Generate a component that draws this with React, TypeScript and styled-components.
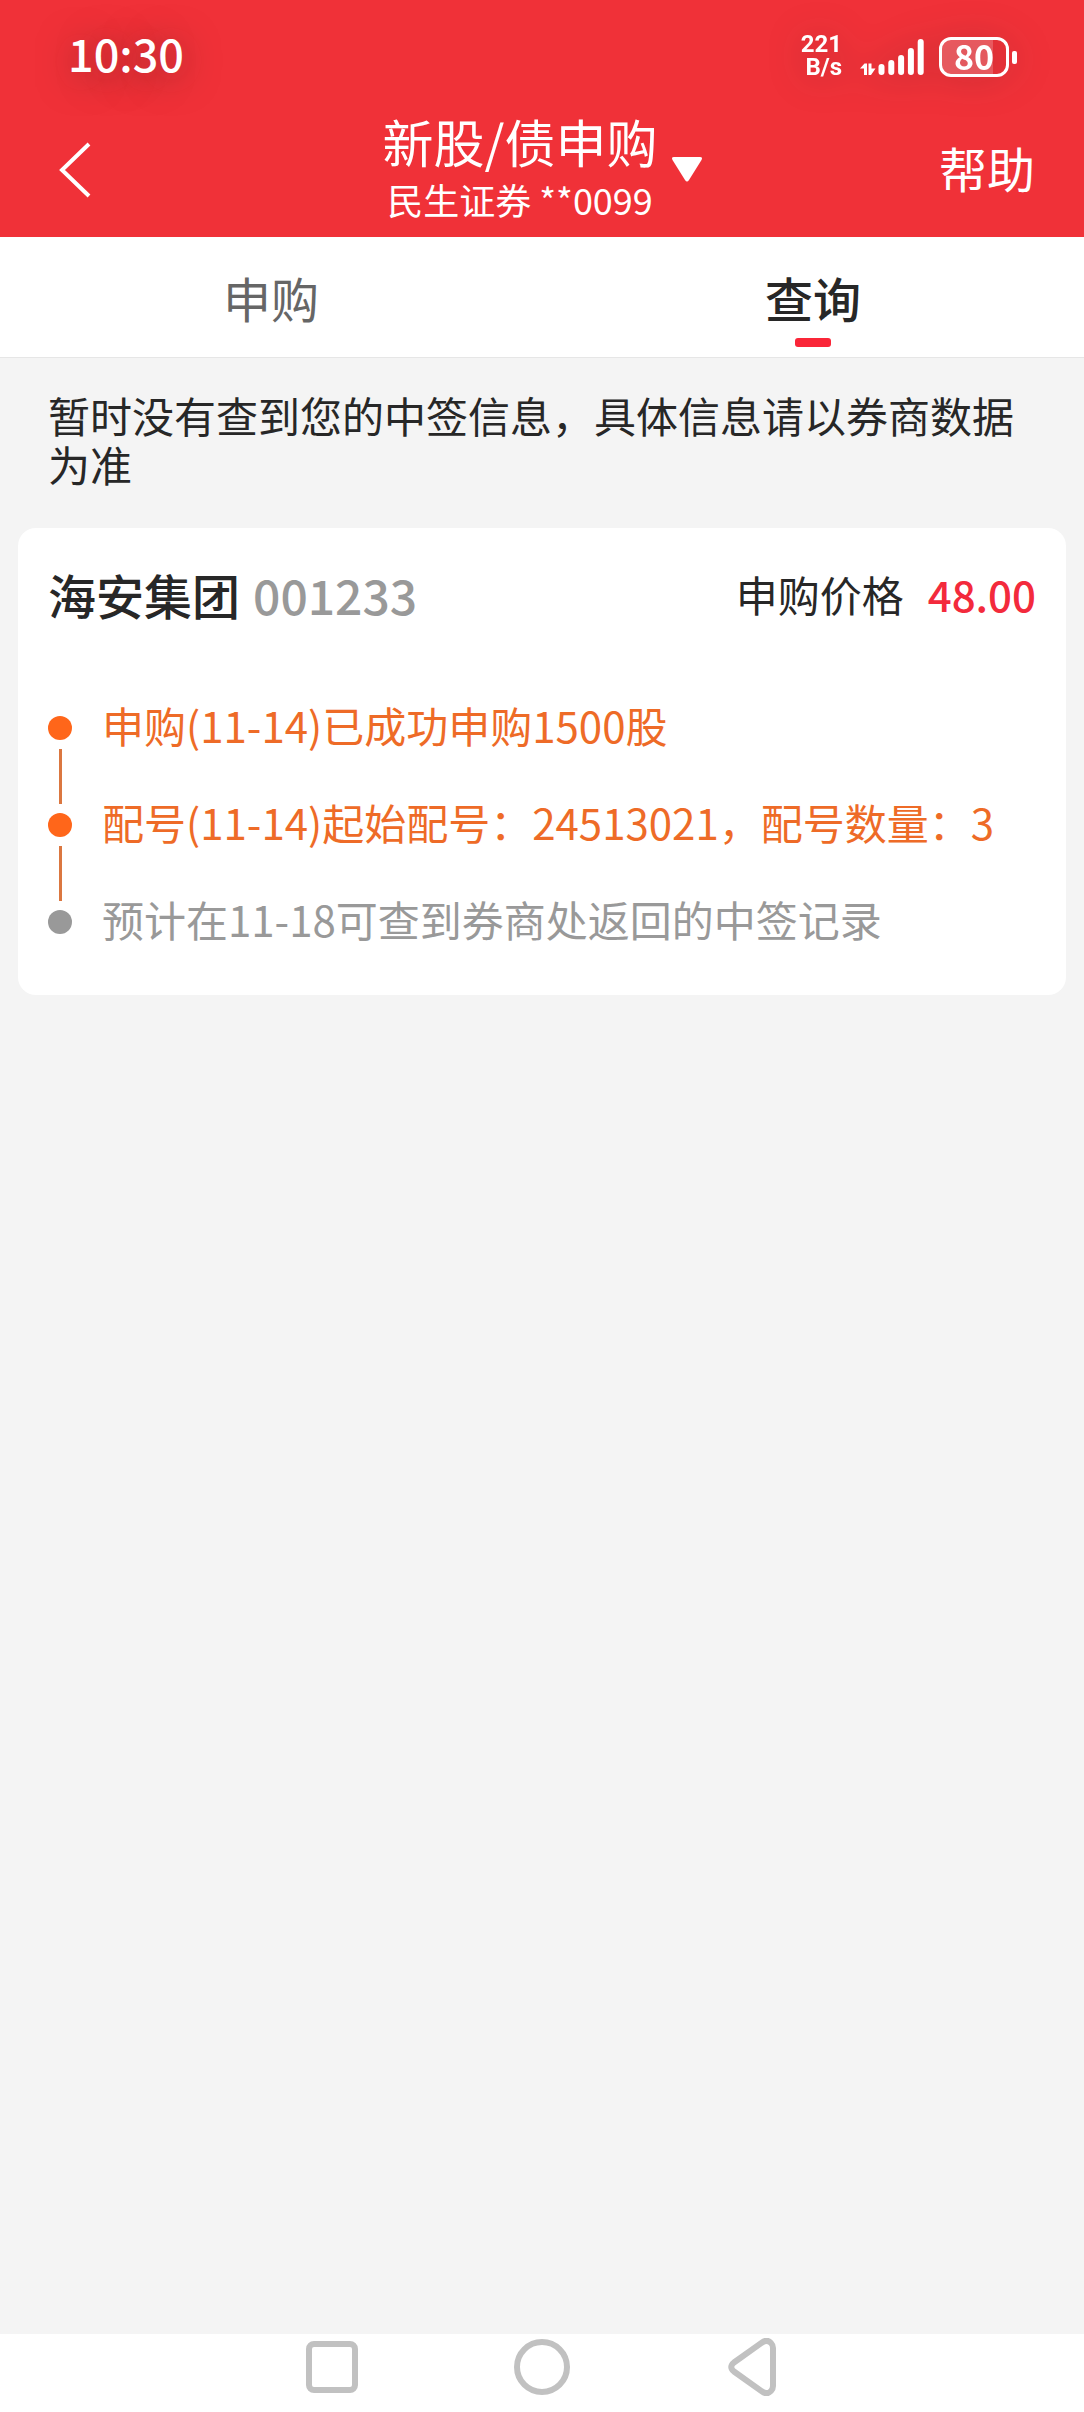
import React, { useState } from "react";
import styled, { createGlobalStyle } from "styled-components";

const GlobalStyle = createGlobalStyle`
  *, *::before, *::after { box-sizing: border-box; }
  body {
    margin: 0;
    background: #f4f4f4;
    font-family: "Noto Sans CJK SC", "Noto Sans", sans-serif;
    color: #272727;
  }
  button {
    margin: 0;
    padding: 0;
    border: 0;
    background: none;
    font: inherit;
    color: inherit;
    cursor: pointer;
  }
  h1, h2, p, ul { margin: 0; padding: 0; font-weight: 400; }
  svg { display: block; }
`;

const Page = styled.div`
  display: flex;
  flex-direction: column;
  min-height: 100vh;
`;

const Header = styled.header`
  background: #f03138;
  color: #fff;
`;

const StatusBar = styled.div`
  display: flex;
  align-items: center;
  justify-content: space-between;
  height: 108px;
  padding: 6px 67px 0 68px;
`;

const Clock = styled.span`
  font-size: 45px;
  line-height: 60px;
  padding-bottom: 8px;
  font-weight: 500;
  text-shadow: 0 4px 36px rgba(40, 40, 40, 0.5);
`;

const StatusIcons = styled.div`
  display: flex;
  align-items: center;
  filter: drop-shadow(0 2px 18px rgba(40, 40, 40, 0.3));
`;

const NetSpeed = styled.span`
  display: flex;
  flex-direction: column;
  margin-right: 18px;
  padding-bottom: 2px;
  font-family: Roboto, "Noto Sans CJK SC", sans-serif;
  font-size: 24px;
  line-height: 23px;
  font-weight: 700;
  text-align: right;
`;

const Signal = styled.svg`
  margin-right: 15px;
`;

const Battery = styled.span`
  display: flex;
  align-items: center;
  gap: 3px;
  &::after {
    content: "";
    width: 5px;
    height: 13px;
    border-radius: 2px;
    background: #fff;
  }
`;

const BatteryBody = styled.span<{ $level: number }>`
  display: flex;
  align-items: center;
  justify-content: center;
  width: 70px;
  height: 40px;
  padding-bottom: 3px;
  border: 3px solid #fff;
  border-radius: 12px;
  background: linear-gradient(
    to right,
    rgba(255, 255, 255, 0.2) ${(p) => p.$level}%,
    transparent ${(p) => p.$level}%
  );
  font-size: 34px;
  line-height: 34px;
  font-weight: 700;
`;

const NavBar = styled.div`
  display: grid;
  grid-template-columns: 1fr auto 1fr;
  align-items: center;
  height: 129px;
  padding: 0 49px 6px;
`;

const BackButton = styled.button`
  justify-self: start;
  padding: 8px;
`;

const AccountButton = styled.button`
  display: flex;
  align-items: center;
  gap: 14px;
`;

const AccountText = styled.span`
  display: flex;
  flex-direction: column;
  align-items: center;
`;

const Title = styled.span`
  font-size: 51px;
  line-height: 58px;
`;

const Subtitle = styled.span`
  font-size: 36px;
  line-height: 58px;
`;

const HelpLink = styled.a`
  justify-self: end;
  padding-bottom: 6px;
  color: #fff;
  font-size: 48px;
  line-height: 60px;
  text-decoration: none;
`;

const Tabs = styled.nav`
  display: grid;
  grid-template-columns: 1fr 1fr;
  background: #fff;
  border-bottom: 1px solid #e6e6e6;
`;

const Tab = styled.button<{ $active: boolean }>`
  display: flex;
  flex-direction: column;
  align-items: center;
  gap: 11px;
  padding: 30px 0 10px;
  font-size: 48px;
  line-height: 60px;
  font-weight: ${(p) => (p.$active ? 500 : 400)};
  color: ${(p) => (p.$active ? "#272727" : "#666")};
  &::after {
    content: "";
    width: 36px;
    height: 9px;
    border-radius: 3px;
    background: ${(p) => (p.$active ? "#fa2638" : "transparent")};
  }
`;

const Main = styled.main`
  flex: 1;
`;

const Notice = styled.p`
  padding: 32px 48px 40px;
  font-size: 42px;
  line-height: 49px;
`;

const Card = styled.section`
  margin: 0 18px;
  padding: 36px 30px 55px;
  border-radius: 18px;
  background: #fff;
`;

const CardHead = styled.div`
  display: flex;
  align-items: center;
  justify-content: space-between;
  margin-bottom: 80px;
  line-height: 60px;
`;

const StockName = styled.h2`
  display: flex;
  gap: 13px;
  font-size: 48px;
  font-weight: 500;
`;

const StockCode = styled.span`
  color: #999;
`;

const Price = styled.p`
  display: flex;
  align-items: center;
  gap: 24px;
  font-size: 42px;
`;

const PriceValue = styled.strong`
  color: #f32a3c;
  font-size: 42px;
  font-weight: 500;
`;

const Timeline = styled.ul`
  list-style: none;
`;

const Step = styled.li<{ $done: boolean }>`
  display: flex;
  gap: 30px;
  min-height: 97px;
  font-size: 42px;
  line-height: 42px;
  color: ${(p) => (p.$done ? "#ee6b27" : "#999")};
  &:last-child { min-height: 0; }
`;

const Rail = styled.span<{ $done: boolean }>`
  display: flex;
  flex-direction: column;
  align-items: center;
  gap: 9px;
  padding-top: 12px;
  &::before {
    content: "";
    width: 24px;
    height: 24px;
    border-radius: 50%;
    background: ${(p) => (p.$done ? "#ff661a" : "#999")};
  }
`;

const Connector = styled.span`
  flex: 1;
  width: 3px;
  margin-bottom: -3px;
  background: #db7740;
`;

const SystemNav = styled.footer`
  display: flex;
  justify-content: center;
  height: 78px;
  padding-bottom: 12px;
  background: #fff;
`;

const SystemButton = styled.button`
  display: flex;
  align-items: center;
  justify-content: center;
  width: 210px;
`;

const steps = [
  { text: "申购(11-14)已成功申购1500股", done: true },
  { text: "配号(11-14)起始配号：24513021，配号数量：3", done: true },
  { text: "预计在11-18可查到券商处返回的中签记录", done: false },
];

const tabs = ["申购", "查询"];

function SignalIcon() {
  const tops = [25, 21, 16, 9, 0];
  return (
    <Signal width="64" height="36" viewBox="0 0 64 36" fill="#fff" aria-hidden="true">
      <path d="M0 29.5 L4.5 24.5 H7 V36 H4 V29.5 Z" />
      <path d="M8.5 24.5 H11.5 V29.5 H15.5 L11 36 H8.5 Z" />
      {tops.map((top, i) => (
        <rect key={top} x={18.5 + i * 9.8} y={top} width="6" height={36 - top} rx="3" />
      ))}
    </Signal>
  );
}

export default function App() {
  const [active, setActive] = useState("查询");
  return (
    <Page>
      <GlobalStyle />
      <Header>
        <StatusBar>
          <Clock>10:30</Clock>
          <StatusIcons>
            <NetSpeed>
              <span>221</span>
              <span>B/s</span>
            </NetSpeed>
            <SignalIcon />
            <Battery>
              <BatteryBody $level={80}>80</BatteryBody>
            </Battery>
          </StatusIcons>
        </StatusBar>
        <NavBar>
          <BackButton aria-label="返回">
            <svg width="36" height="56" viewBox="0 0 36 56" fill="none" stroke="#fff" strokeWidth="4">
              <path d="M32 2 L5 28 L32 54" />
            </svg>
          </BackButton>
          <AccountButton>
            <AccountText>
              <Title>新股/债申购</Title>
              <Subtitle>民生证券 **0099</Subtitle>
            </AccountText>
            <svg width="30" height="25" viewBox="0 0 30 25" fill="#fff" aria-hidden="true">
              <path d="M2 0 H28 Q31 0 29.5 3 L17 23 Q15 26 13 23 L0.5 3 Q-1 0 2 0 Z" />
            </svg>
          </AccountButton>
          <HelpLink href="#help">帮助</HelpLink>
        </NavBar>
      </Header>
      <Tabs>
        {tabs.map((name) => (
          <Tab key={name} $active={name === active} onClick={() => setActive(name)}>
            {name}
          </Tab>
        ))}
      </Tabs>
      <Main>
        <Notice>暂时没有查到您的中签信息，具体信息请以券商数据为准</Notice>
        <Card>
          <CardHead>
            <StockName>
              <span>海安集团</span>
              <StockCode>001233</StockCode>
            </StockName>
            <Price>
              <span>申购价格</span>
              <PriceValue>48.00</PriceValue>
            </Price>
          </CardHead>
          <Timeline>
            {steps.map((step, i) => (
              <Step key={step.text} $done={step.done}>
                <Rail $done={step.done}>{i < steps.length - 1 && <Connector />}</Rail>
                <span>{step.text}</span>
              </Step>
            ))}
          </Timeline>
        </Card>
      </Main>
      <SystemNav>
        <SystemButton aria-label="最近任务">
          <svg width="52" height="52" viewBox="0 0 52 52" fill="none" stroke="#c1c1c1" strokeWidth="6">
            <rect x="3" y="3" width="46" height="46" rx="5" />
          </svg>
        </SystemButton>
        <SystemButton aria-label="主屏幕">
          <svg width="56" height="56" viewBox="0 0 56 56" fill="none" stroke="#c1c1c1" strokeWidth="6">
            <circle cx="28" cy="28" r="25" />
          </svg>
        </SystemButton>
        <SystemButton aria-label="后退">
          <svg width="48" height="58" viewBox="0 0 48 58" fill="none" stroke="#c1c1c1" strokeWidth="6">
            <path d="M34.5 4.2 L6 24.5 Q0.5 29 6 33.5 L34.5 53.8 Q39 57 43 53 Q45 51 45 48 V10 Q45 7 43 5 Q39 1 34.5 4.2 Z" />
          </svg>
        </SystemButton>
      </SystemNav>
    </Page>
  );
}
